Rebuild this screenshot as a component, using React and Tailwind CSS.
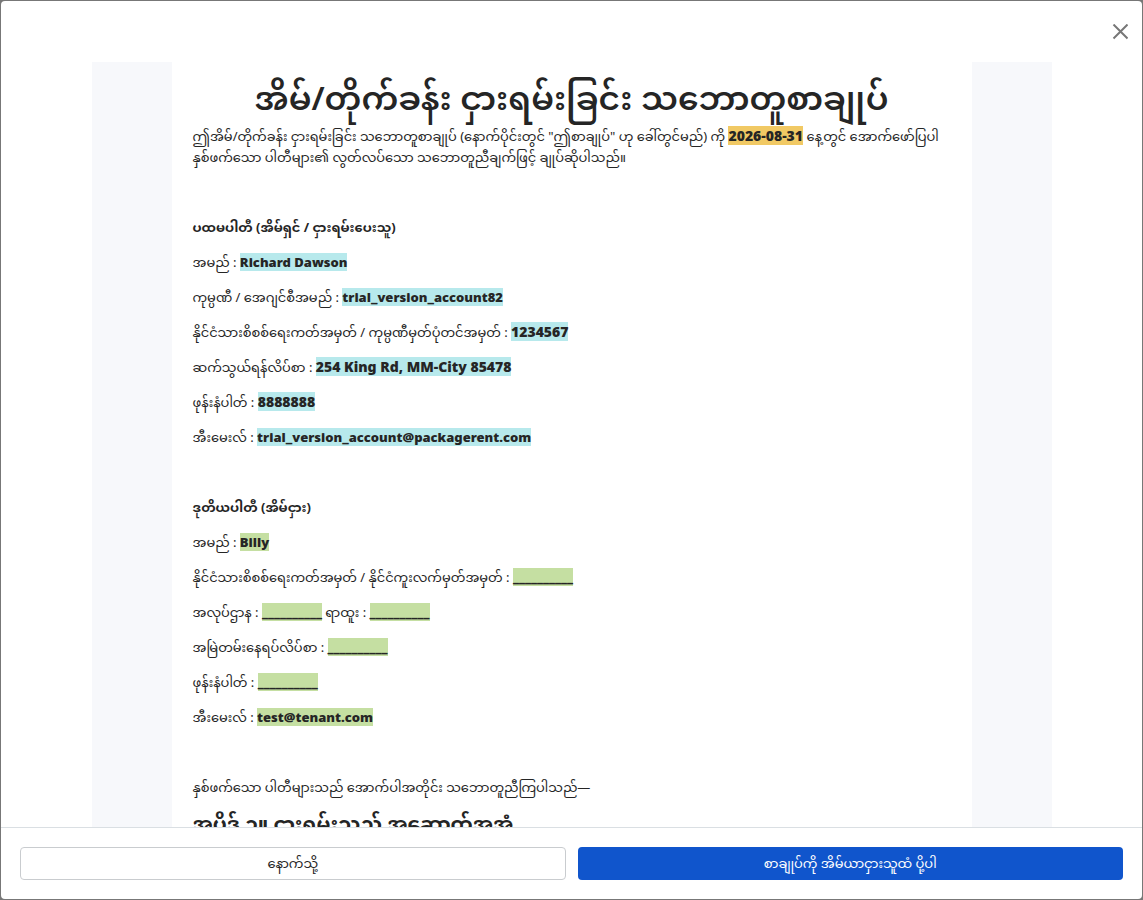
import clsx from "clsx";

const MARKS = {
    date: "bg-[#f1c964]",
    owner: "bg-[#b7e9ec]",
    tenant: "bg-[#c5dfa2]",
};

const BLANK = "__________";

const OWNER_ROWS = [
    { label: "အမည်", value: "Richard Dawson" },
    { label: "ကုမ္ပဏီ / အေဂျင်စီအမည်", value: "trial_version_account82" },
    { label: "နိုင်ငံသားစိစစ်ရေးကတ်အမှတ် / ကုမ္ပဏီမှတ်ပုံတင်အမှတ်", value: "1234567" },
    { label: "ဆက်သွယ်ရန်လိပ်စာ", value: "254 King Rd, MM-City 85478" },
    { label: "ဖုန်းနံပါတ်", value: "8888888" },
    { label: "အီးမေးလ်", value: "trial_version_account@packagerent.com" },
];

const TENANT_ROWS = [
    [{ label: "အမည်", value: "Billy" }],
    [{ label: "နိုင်ငံသားစိစစ်ရေးကတ်အမှတ် / နိုင်ငံကူးလက်မှတ်အမှတ်", value: BLANK }],
    [
        { label: "အလုပ်ဌာန", value: BLANK },
        { label: "ရာထူး", value: BLANK },
    ],
    [{ label: "အမြဲတမ်းနေရပ်လိပ်စာ", value: BLANK }],
    [{ label: "ဖုန်းနံပါတ်", value: BLANK }],
    [{ label: "အီးမေးလ်", value: "test@tenant.com" }],
];

function Mark({ kind, children }) {
    // values that open with a number are set one step larger, empty blanks one step smaller
    const numeric = /^\d/.test(children);
    const blank = children === BLANK;

    return (
        <strong
            className={clsx(
                "leading-4 font-black",
                numeric && "text-[14px]",
                blank && "pt-px text-[12px]",
                MARKS[kind]
            )}
        >
            {children}
        </strong>
    );
}

function Field({ label, value, kind }) {
    return (
        <>
            {label} : <Mark kind={kind}>{value}</Mark>{" "}
        </>
    );
}

export default function App() {
    return (
        <div className="h-screen bg-[#777777] p-px font-['Noto_Sans','Noto_Sans_Myanmar',sans-serif] text-[#252525]">
            <div role="dialog" aria-modal="true" className="flex h-full flex-col overflow-hidden rounded-sm bg-white">
                <header className="flex h-[61px] shrink-0 items-center justify-end px-3">
                    <button type="button" aria-label="Close" className="flex size-5 items-center justify-center text-[#777777]">
                        <svg width="16" height="16" viewBox="0 0 16 16" fill="none" stroke="currentColor" strokeWidth="2">
                            <path d="M1.5 .5 15.5 14.5M15.5 .5 1.5 14.5" />
                        </svg>
                    </button>
                </header>

                <main className="min-h-0 flex-1 overflow-x-hidden overflow-y-auto [scrollbar-width:none]">
                    <div className="mx-auto min-h-full max-w-[960px] bg-[#f7f8fb]">
                        <article className="mx-auto flex max-w-[800px] flex-col gap-[14px] bg-white px-[21px] pt-2 text-[13px] leading-[21px]">
                            <div>
                                <h1 className="text-center text-[33px] leading-[56px] font-semibold">
                                    အိမ်/တိုက်ခန်း ငှားရမ်းခြင်း သဘောတူစာချုပ်
                                </h1>
                                <p>
                                    ဤအိမ်/တိုက်ခန်း ငှားရမ်းခြင်း သဘောတူစာချုပ် (နောက်ပိုင်းတွင် "ဤစာချုပ်" ဟု ခေါ်တွင်မည်) ကို{" "}
                                    <Mark kind="date">2026-08-31</Mark> နေ့တွင် အောက်ဖော်ပြပါ နှစ်ဖက်သော ပါတီများ၏ လွတ်လပ်သော
                                    သဘောတူညီချက်ဖြင့် ချုပ်ဆိုပါသည်။
                                </p>
                            </div>

                            <h2 className="pt-[35px] font-bold">ပထမပါတီ (အိမ်ရှင် / ငှားရမ်းပေးသူ)</h2>
                            {OWNER_ROWS.map((row) => (
                                <p key={row.label}>
                                    <Field {...row} kind="owner" />
                                </p>
                            ))}

                            <h2 className="pt-[35px] font-bold">ဒုတိယပါတီ (အိမ်ငှား)</h2>
                            {TENANT_ROWS.map((fields) => (
                                <p key={fields[0].label}>
                                    {fields.map((field) => (
                                        <Field key={field.label} {...field} kind="tenant" />
                                    ))}
                                </p>
                            ))}

                            <p className="pt-[35px]">နှစ်ဖက်သော ပါတီများသည် အောက်ပါအတိုင်း သဘောတူညီကြပါသည်—</p>
                            <h2 className="text-[20px] leading-6 font-bold">အပိုဒ် ၁။ ငှားရမ်းသည့် အဆောက်အအုံ</h2>
                        </article>
                    </div>
                </main>

                <footer className="grid shrink-0 grid-cols-2 gap-3 border-t border-[#dadfe3] p-[19px] text-[13px]">
                    <button type="button" className="h-[33px] rounded border border-[#c9cccf] bg-white">
                        နောက်သို့
                    </button>
                    <button type="button" className="h-[33px] rounded bg-[#1055cc] text-white">
                        စာချုပ်ကို အိမ်ယာငှားသူထံ ပို့ပါ
                    </button>
                </footer>
            </div>
        </div>
    );
}
